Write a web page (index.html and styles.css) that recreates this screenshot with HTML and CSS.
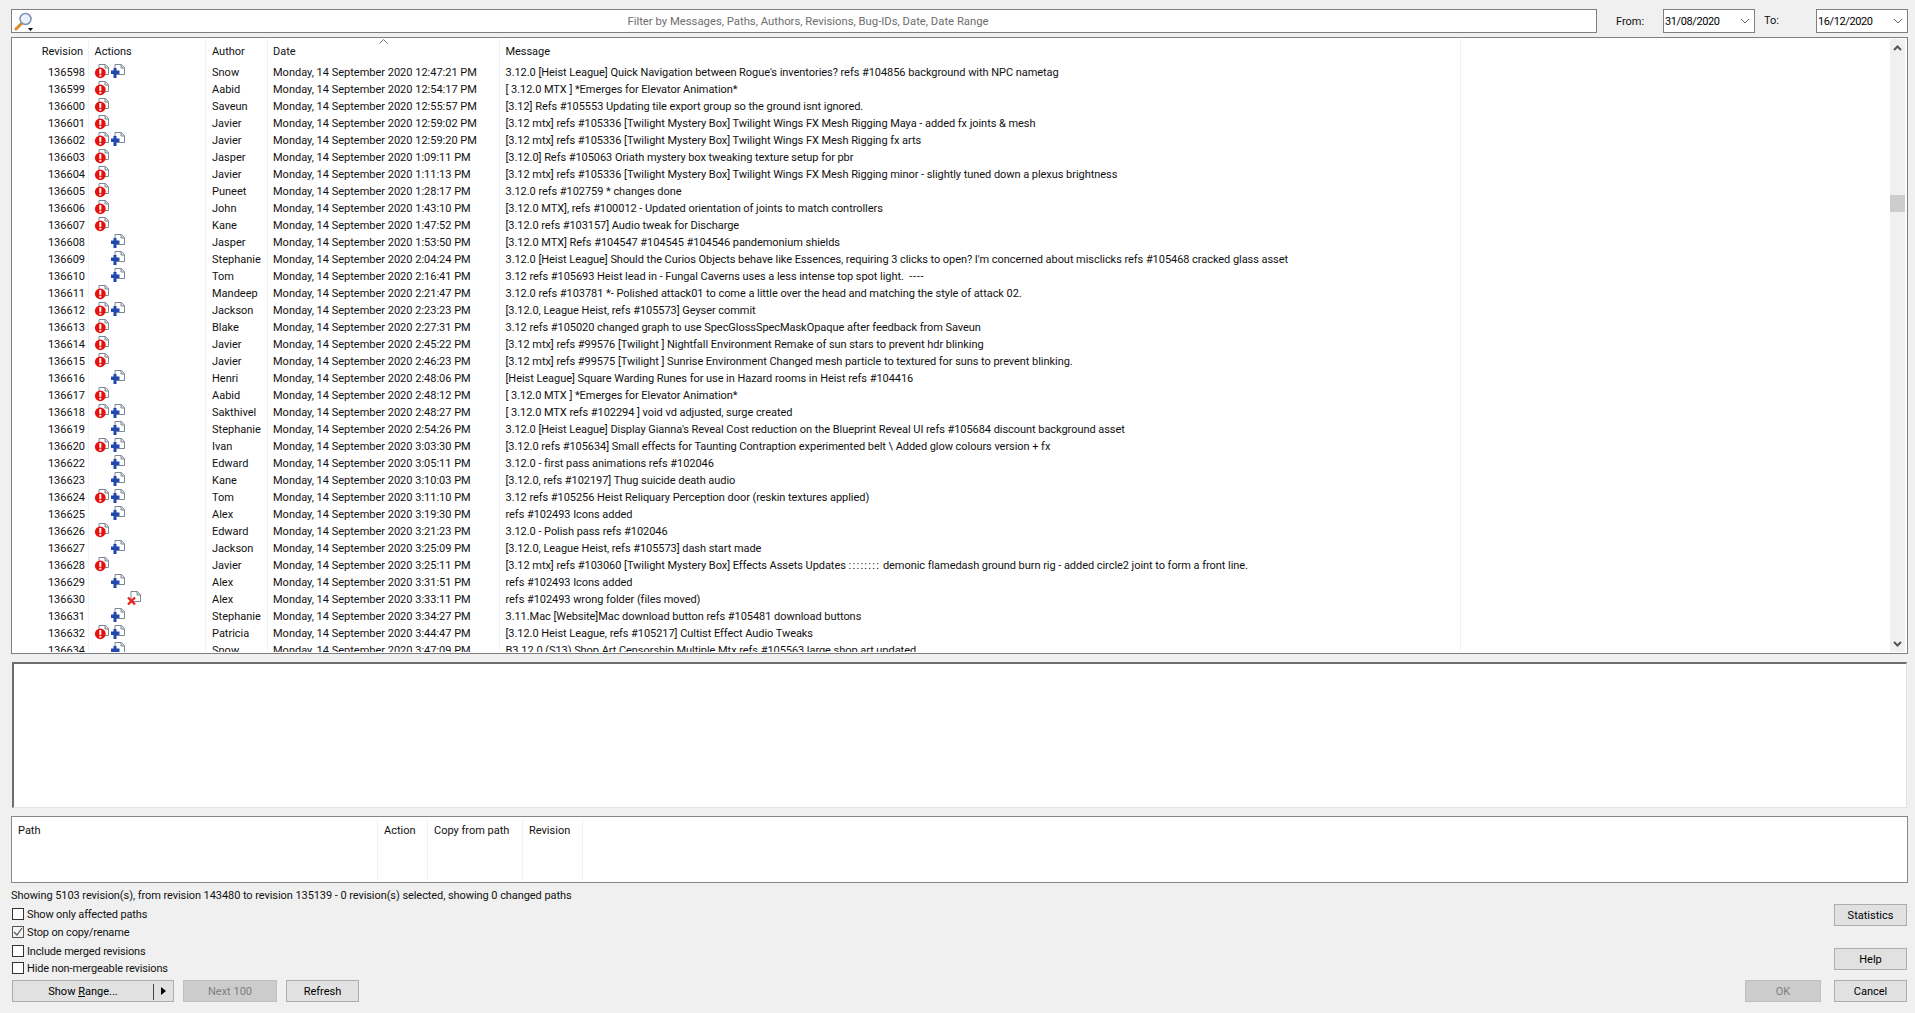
FILE: index.html
```html
<!DOCTYPE html>
<html lang="en">
<head>
<meta charset="utf-8">
<title>Log Messages</title>
<link rel="stylesheet" href="styles.css">
</head>
<body>
<svg class="defs" width="0" height="0" aria-hidden="true">
  <symbol id="page" viewBox="0 0 16 16"><path d="M5 .5H11.500L14.500 3.500V10.500H5Z" fill="#fff" stroke="#7b8794"/><path d="M11 .5V4H14.500" fill="#dfe3e8" stroke="#7b8794"/></symbol>
  <symbol id="mod" viewBox="0 0 16 16"><use href="#page"/><circle cx="6.300" cy="8.800" r="5.400" fill="#e8100c"/><rect x="5.300" y="5" width="2" height="4.800" fill="#fff"/><rect x="5.300" y="10.800" width="2" height="1.800" fill="#fff"/></symbol>
  <symbol id="add" viewBox="0 0 16 16"><use href="#page"/><path d="M3.500 4H6.500V6.500H9.500V10H6.500V14H3.500V10H1V6.500H3.500Z" fill="#2148ad"/></symbol>
  <symbol id="del" viewBox="0 0 16 16"><use href="#page"/><path d="M2 6.500L9 13.500M9 6.500L2 13.500" stroke="#e8231c" stroke-width="2.400" fill="none"/></symbol>
</svg>

<header class="topbar">
  <div class="filter">
    <svg class="magnifier" width="20" height="20" viewBox="0 0 20 20"><path d="M7 12L2 17" stroke="#d98a2b" stroke-width="3" stroke-linecap="round"/><circle cx="11.500" cy="7" r="5.500" fill="#e6f1fb" stroke="#7a93ad" stroke-width="1.500"/><path d="M8.500 6.500A3 3 0 0 1 11 4" stroke="#fff" fill="none"/><path d="M14 16H19L16.500 19Z" fill="#000"/></svg>
    <span class="filter-text">Filter by Messages, Paths, Authors, Revisions, Bug-IDs, Date, Date Range</span>
  </div>
  <span class="from-label">From:</span>
  <div class="date"><span>31/08/2020</span><svg width="10" height="6" viewBox="0 0 10 6"><path d="M1 1L5 5L9 1" fill="none" stroke="#666"/></svg></div>
  <span class="to-label">To:</span>
  <div class="date date-to"><span>16/12/2020</span><svg width="10" height="6" viewBox="0 0 10 6"><path d="M1 1L5 5L9 1" fill="none" stroke="#666"/></svg></div>
</header>

<section class="list">
  <div class="list-body">
    <div class="row head">
      <div class="c rev">Revision</div><div class="c act act-head">Actions</div><div class="c auth">Author</div><div class="c dt">Date<svg class="sort" width="9" height="5" viewBox="0 0 9 5"><path d="M.5 4.500L4.500 .5L8.500 4.500" fill="none" stroke="#777"/></svg></div><div class="c msg">Message</div><div class="c rest"></div>
    </div>
    <div class="row"><div class="c rev">136598</div><div class="c act"><svg class="ic"><use href="#mod"/></svg><svg class="ic"><use href="#add"/></svg></div><div class="c auth">Snow</div><div class="c dt">Monday, 14 September 2020 12:47:21 PM</div><div class="c msg">3.12.0 [Heist League] Quick Navigation between Rogue's inventories? refs #104856 background with NPC nametag</div><div class="c rest"></div></div>
    <div class="row"><div class="c rev">136599</div><div class="c act"><svg class="ic"><use href="#mod"/></svg></div><div class="c auth">Aabid</div><div class="c dt">Monday, 14 September 2020 12:54:17 PM</div><div class="c msg">[ 3.12.0 MTX ] *Emerges for Elevator Animation*</div><div class="c rest"></div></div>
    <div class="row"><div class="c rev">136600</div><div class="c act"><svg class="ic"><use href="#mod"/></svg></div><div class="c auth">Saveun</div><div class="c dt">Monday, 14 September 2020 12:55:57 PM</div><div class="c msg">[3.12] Refs #105553 Updating tile export group so the ground isnt ignored.</div><div class="c rest"></div></div>
    <div class="row"><div class="c rev">136601</div><div class="c act"><svg class="ic"><use href="#mod"/></svg></div><div class="c auth">Javier</div><div class="c dt">Monday, 14 September 2020 12:59:02 PM</div><div class="c msg">[3.12 mtx] refs #105336 [Twilight Mystery Box] Twilight Wings FX Mesh Rigging Maya - added fx joints &amp; mesh</div><div class="c rest"></div></div>
    <div class="row"><div class="c rev">136602</div><div class="c act"><svg class="ic"><use href="#mod"/></svg><svg class="ic"><use href="#add"/></svg></div><div class="c auth">Javier</div><div class="c dt">Monday, 14 September 2020 12:59:20 PM</div><div class="c msg">[3.12 mtx] refs #105336 [Twilight Mystery Box] Twilight Wings FX Mesh Rigging fx arts</div><div class="c rest"></div></div>
    <div class="row"><div class="c rev">136603</div><div class="c act"><svg class="ic"><use href="#mod"/></svg></div><div class="c auth">Jasper</div><div class="c dt">Monday, 14 September 2020 1:09:11 PM</div><div class="c msg">[3.12.0] Refs #105063 Oriath mystery box tweaking texture setup for pbr</div><div class="c rest"></div></div>
    <div class="row"><div class="c rev">136604</div><div class="c act"><svg class="ic"><use href="#mod"/></svg></div><div class="c auth">Javier</div><div class="c dt">Monday, 14 September 2020 1:11:13 PM</div><div class="c msg">[3.12 mtx] refs #105336 [Twilight Mystery Box] Twilight Wings FX Mesh Rigging minor - slightly tuned down a plexus brightness</div><div class="c rest"></div></div>
    <div class="row"><div class="c rev">136605</div><div class="c act"><svg class="ic"><use href="#mod"/></svg></div><div class="c auth">Puneet</div><div class="c dt">Monday, 14 September 2020 1:28:17 PM</div><div class="c msg">3.12.0 refs #102759 * changes done</div><div class="c rest"></div></div>
    <div class="row"><div class="c rev">136606</div><div class="c act"><svg class="ic"><use href="#mod"/></svg></div><div class="c auth">John</div><div class="c dt">Monday, 14 September 2020 1:43:10 PM</div><div class="c msg">[3.12.0 MTX], refs #100012 - Updated orientation of joints to match controllers</div><div class="c rest"></div></div>
    <div class="row"><div class="c rev">136607</div><div class="c act"><svg class="ic"><use href="#mod"/></svg></div><div class="c auth">Kane</div><div class="c dt">Monday, 14 September 2020 1:47:52 PM</div><div class="c msg">[3.12.0 refs #103157] Audio tweak for Discharge</div><div class="c rest"></div></div>
    <div class="row"><div class="c rev">136608</div><div class="c act"><span class="slot"></span><svg class="ic"><use href="#add"/></svg></div><div class="c auth">Jasper</div><div class="c dt">Monday, 14 September 2020 1:53:50 PM</div><div class="c msg">[3.12.0 MTX] Refs #104547 #104545 #104546 pandemonium shields</div><div class="c rest"></div></div>
    <div class="row"><div class="c rev">136609</div><div class="c act"><span class="slot"></span><svg class="ic"><use href="#add"/></svg></div><div class="c auth">Stephanie</div><div class="c dt">Monday, 14 September 2020 2:04:24 PM</div><div class="c msg">3.12.0 [Heist League] Should the Curios Objects behave like Essences, requiring 3 clicks to open? I'm concerned about misclicks refs #105468 cracked glass asset</div><div class="c rest"></div></div>
    <div class="row"><div class="c rev">136610</div><div class="c act"><span class="slot"></span><svg class="ic"><use href="#add"/></svg></div><div class="c auth">Tom</div><div class="c dt">Monday, 14 September 2020 2:16:41 PM</div><div class="c msg">3.12 refs #105693 Heist lead in - Fungal Caverns uses a less intense top spot light. &nbsp;<span class="dashes">----</span></div><div class="c rest"></div></div>
    <div class="row"><div class="c rev">136611</div><div class="c act"><svg class="ic"><use href="#mod"/></svg></div><div class="c auth">Mandeep</div><div class="c dt">Monday, 14 September 2020 2:21:47 PM</div><div class="c msg">3.12.0 refs #103781 *- Polished attack01 to come a little over the head and matching the style of attack 02.</div><div class="c rest"></div></div>
    <div class="row"><div class="c rev">136612</div><div class="c act"><svg class="ic"><use href="#mod"/></svg><svg class="ic"><use href="#add"/></svg></div><div class="c auth">Jackson</div><div class="c dt">Monday, 14 September 2020 2:23:23 PM</div><div class="c msg">[3.12.0, League Heist, refs #105573] Geyser commit</div><div class="c rest"></div></div>
    <div class="row"><div class="c rev">136613</div><div class="c act"><svg class="ic"><use href="#mod"/></svg></div><div class="c auth">Blake</div><div class="c dt">Monday, 14 September 2020 2:27:31 PM</div><div class="c msg">3.12 refs #105020 changed graph to use SpecGlossSpecMaskOpaque after feedback from Saveun</div><div class="c rest"></div></div>
    <div class="row"><div class="c rev">136614</div><div class="c act"><svg class="ic"><use href="#mod"/></svg></div><div class="c auth">Javier</div><div class="c dt">Monday, 14 September 2020 2:45:22 PM</div><div class="c msg">[3.12 mtx] refs #99576 [Twilight ] Nightfall Environment Remake of sun stars to prevent hdr blinking</div><div class="c rest"></div></div>
    <div class="row"><div class="c rev">136615</div><div class="c act"><svg class="ic"><use href="#mod"/></svg></div><div class="c auth">Javier</div><div class="c dt">Monday, 14 September 2020 2:46:23 PM</div><div class="c msg">[3.12 mtx] refs #99575 [Twilight ] Sunrise Environment Changed mesh particle to textured for suns to prevent blinking.</div><div class="c rest"></div></div>
    <div class="row"><div class="c rev">136616</div><div class="c act"><span class="slot"></span><svg class="ic"><use href="#add"/></svg></div><div class="c auth">Henri</div><div class="c dt">Monday, 14 September 2020 2:48:06 PM</div><div class="c msg">[Heist League] Square Warding Runes for use in Hazard rooms in Heist refs #104416</div><div class="c rest"></div></div>
    <div class="row"><div class="c rev">136617</div><div class="c act"><svg class="ic"><use href="#mod"/></svg></div><div class="c auth">Aabid</div><div class="c dt">Monday, 14 September 2020 2:48:12 PM</div><div class="c msg">[ 3.12.0 MTX ] *Emerges for Elevator Animation*</div><div class="c rest"></div></div>
    <div class="row"><div class="c rev">136618</div><div class="c act"><svg class="ic"><use href="#mod"/></svg><svg class="ic"><use href="#add"/></svg></div><div class="c auth">Sakthivel</div><div class="c dt">Monday, 14 September 2020 2:48:27 PM</div><div class="c msg">[ 3.12.0 MTX refs #102294 ] void vd adjusted, surge created</div><div class="c rest"></div></div>
    <div class="row"><div class="c rev">136619</div><div class="c act"><span class="slot"></span><svg class="ic"><use href="#add"/></svg></div><div class="c auth">Stephanie</div><div class="c dt">Monday, 14 September 2020 2:54:26 PM</div><div class="c msg">3.12.0 [Heist League] Display Gianna's Reveal Cost reduction on the Blueprint Reveal UI refs #105684 discount background asset</div><div class="c rest"></div></div>
    <div class="row"><div class="c rev">136620</div><div class="c act"><svg class="ic"><use href="#mod"/></svg><svg class="ic"><use href="#add"/></svg></div><div class="c auth">Ivan</div><div class="c dt">Monday, 14 September 2020 3:03:30 PM</div><div class="c msg">[3.12.0 refs #105634] Small effects for Taunting Contraption experimented belt \ Added glow colours version + fx</div><div class="c rest"></div></div>
    <div class="row"><div class="c rev">136622</div><div class="c act"><span class="slot"></span><svg class="ic"><use href="#add"/></svg></div><div class="c auth">Edward</div><div class="c dt">Monday, 14 September 2020 3:05:11 PM</div><div class="c msg">3.12.0 - first pass animations refs #102046</div><div class="c rest"></div></div>
    <div class="row"><div class="c rev">136623</div><div class="c act"><span class="slot"></span><svg class="ic"><use href="#add"/></svg></div><div class="c auth">Kane</div><div class="c dt">Monday, 14 September 2020 3:10:03 PM</div><div class="c msg">[3.12.0, refs #102197] Thug suicide death audio</div><div class="c rest"></div></div>
    <div class="row"><div class="c rev">136624</div><div class="c act"><svg class="ic"><use href="#mod"/></svg><svg class="ic"><use href="#add"/></svg></div><div class="c auth">Tom</div><div class="c dt">Monday, 14 September 2020 3:11:10 PM</div><div class="c msg">3.12 refs #105256 Heist Reliquary Perception door (reskin textures applied)</div><div class="c rest"></div></div>
    <div class="row"><div class="c rev">136625</div><div class="c act"><span class="slot"></span><svg class="ic"><use href="#add"/></svg></div><div class="c auth">Alex</div><div class="c dt">Monday, 14 September 2020 3:19:30 PM</div><div class="c msg">refs #102493 Icons added</div><div class="c rest"></div></div>
    <div class="row"><div class="c rev">136626</div><div class="c act"><svg class="ic"><use href="#mod"/></svg></div><div class="c auth">Edward</div><div class="c dt">Monday, 14 September 2020 3:21:23 PM</div><div class="c msg">3.12.0 - Polish pass refs #102046</div><div class="c rest"></div></div>
    <div class="row"><div class="c rev">136627</div><div class="c act"><span class="slot"></span><svg class="ic"><use href="#add"/></svg></div><div class="c auth">Jackson</div><div class="c dt">Monday, 14 September 2020 3:25:09 PM</div><div class="c msg">[3.12.0, League Heist, refs #105573] dash start made</div><div class="c rest"></div></div>
    <div class="row"><div class="c rev">136628</div><div class="c act"><svg class="ic"><use href="#mod"/></svg></div><div class="c auth">Javier</div><div class="c dt">Monday, 14 September 2020 3:25:11 PM</div><div class="c msg">[3.12 mtx] refs #103060 [Twilight Mystery Box] Effects Assets Updates <span class="colons">::::::::</span> demonic flamedash ground burn rig - added circle2 joint to form a front line.</div><div class="c rest"></div></div>
    <div class="row"><div class="c rev">136629</div><div class="c act"><span class="slot"></span><svg class="ic"><use href="#add"/></svg></div><div class="c auth">Alex</div><div class="c dt">Monday, 14 September 2020 3:31:51 PM</div><div class="c msg">refs #102493 Icons added</div><div class="c rest"></div></div>
    <div class="row"><div class="c rev">136630</div><div class="c act"><span class="slot"></span><span class="slot"></span><svg class="ic"><use href="#del"/></svg></div><div class="c auth">Alex</div><div class="c dt">Monday, 14 September 2020 3:33:11 PM</div><div class="c msg">refs #102493 wrong folder (files moved)</div><div class="c rest"></div></div>
    <div class="row"><div class="c rev">136631</div><div class="c act"><span class="slot"></span><svg class="ic"><use href="#add"/></svg></div><div class="c auth">Stephanie</div><div class="c dt">Monday, 14 September 2020 3:34:27 PM</div><div class="c msg">3.11.Mac [Website]Mac download button refs #105481 download buttons</div><div class="c rest"></div></div>
    <div class="row"><div class="c rev">136632</div><div class="c act"><svg class="ic"><use href="#mod"/></svg><svg class="ic"><use href="#add"/></svg></div><div class="c auth">Patricia</div><div class="c dt">Monday, 14 September 2020 3:44:47 PM</div><div class="c msg">[3.12.0 Heist League, refs #105217] Cultist Effect Audio Tweaks</div><div class="c rest"></div></div>
    <div class="row"><div class="c rev">136634</div><div class="c act"><span class="slot"></span><svg class="ic"><use href="#add"/></svg></div><div class="c auth">Snow</div><div class="c dt">Monday, 14 September 2020 3:47:09 PM</div><div class="c msg">B3.12.0 (S13) Shop Art Censorship Multiple Mtx refs #105563 large shop art updated</div><div class="c rest"></div></div>
  </div>
  <div class="scrollbar">
    <div class="sb-arrow"><svg width="9" height="6" viewBox="0 0 9 6"><path d="M1 5L4.500 1.500L8 5" fill="none" stroke="#555" stroke-width="2"/></svg></div>
    <div class="sb-track"><div class="sb-thumb"></div></div>
    <div class="sb-arrow"><svg width="9" height="6" viewBox="0 0 9 6"><path d="M1 1L4.500 4.500L8 1" fill="none" stroke="#555" stroke-width="2"/></svg></div>
  </div>
</section>

<div class="message-box"></div>

<section class="paths">
  <div class="p p-path">Path</div><div class="p p-action">Action</div><div class="p p-copy">Copy from path</div><div class="p p-rev">Revision</div>
</section>

<div class="status">Showing 5103 revision(s), from revision 143480 to revision 135139 - 0 revision(s) selected, showing 0 changed paths</div>

<footer class="bottom">
  <div class="left">
    <div class="check h18"><span class="box"></span>Show only affected paths</div>
    <div class="check h18"><span class="box"><svg width="10" height="10" viewBox="0 0 10 10"><path d="M1 5L4 8L9 1" fill="none" stroke="#555" stroke-width="1.200"/></svg></span>Stop on copy/rename</div>
    <div class="check h19"><span class="box"></span>Include merged revisions</div>
    <div class="check h16"><span class="box"></span>Hide non-mergeable revisions</div>
    <div class="btn-row">
      <div class="btn btn-range"><span class="range-label">Show <u>R</u>ange...</span><span class="range-split"><svg width="5" height="8" viewBox="0 0 5 8"><path d="M0 0L5 4L0 8Z" fill="#000"/></svg></span></div>
      <div class="btn btn-next disabled">Next 100</div>
      <div class="btn btn-refresh">Refresh</div>
    </div>
  </div>
  <div class="right">
    <div class="btn btn-side btn-stats">Statistics</div>
    <div class="btn btn-side btn-help">Help</div>
    <div class="ok-row">
      <div class="btn btn-ok disabled">OK</div>
      <div class="btn btn-side">Cancel</div>
    </div>
  </div>
</footer>
</body>
</html>
```
FILE: styles.css
```css
* { box-sizing: border-box; }
html, body { margin: 0; padding: 0; }
body {
  width: 1915px;
  height: 1013px;
  overflow: hidden;
  background: #f0f0f0;
  color: #111;
  font: 11px/16px Roboto, "Liberation Sans", Arial, sans-serif;
}
.defs { display: block; height: 0; }

/* top bar */
.topbar { display: flex; align-items: flex-start; height: 33px; padding: 9px 0 0 11px; }
.filter {
  position: relative;
  display: flex; align-items: center; justify-content: center;
  width: 1586px; height: 24px;
  padding: 1px 0 0 8px;
  background: #fff; border: 1px solid #7f7f7f;
  color: #6d6d6d;
  font-size: 11.300px;
}
.magnifier { position: absolute; left: 2px; top: 2px; }
.from-label { width: 47px; margin-left: 19px; line-height: 26px; }
.to-label { width: 52px; margin-left: 9px; line-height: 24px; }
.date {
  display: flex; align-items: center; justify-content: space-between;
  width: 92px; height: 24px; padding: 0 4px 0 1px;
  background: #fff; border: 1px solid #7f7f7f; color: #000;
  letter-spacing: -.4px;
}
.date span { padding-top: 2px; }

/* revision list */
.list {
  display: flex;
  width: 1897px; height: 617px;
  margin: 4px 0 0 11px;
  padding: 1px 2px 1px 0;
  background: #fff; border: 1px solid #7f7f7f;
  overflow: hidden;
}
.list-body { flex: 1; min-width: 0; overflow: hidden; }
.row {
  display: grid;
  grid-template-columns: 77px 117px 62px 232px 961px 1fr;
  height: 17px;
}
.row.head { height: 25px; position: relative; }
.head .c { padding-top: 4px; }
.c {
  height: 100%;
  white-space: nowrap; overflow: hidden;
  border-right: 1px solid #edf2f9;
  line-height: 18px;
}
.rev { text-align: right; padding-right: 3px; }
.head .rev { padding-right: 5px; }
.act { display: flex; padding-left: 5px; }
.act-head { padding-left: 5.500px; }
.auth { padding-left: 6px; }
.dt { padding-left: 5px; }
.msg { padding-left: 5.500px; letter-spacing: -.05px; }
.dashes { letter-spacing: .7px; }
.colons { letter-spacing: 1.300px; }
.rest { border-right: 0; }
.ic { display: block; width: 16px; height: 16px; flex: none; }
.slot { display: block; width: 16px; flex: none; }
.sort { position: absolute; left: 367px; top: 0; }

.scrollbar { display: flex; flex-direction: column; width: 15px; flex: none; background: #f0f0f0; }
.sb-arrow { display: flex; align-items: center; justify-content: center; height: 17px; flex: none; }
.sb-track { flex: 1; padding-top: 139px; }
.sb-thumb { height: 17px; background: #cdcdcd; }

/* message box */
.message-box {
  width: 1895px; height: 146px;
  margin: 8px 0 0 12px;
  background: #fff;
  border-style: solid; border-color: #6e6e6e #e3e3e3 #e3e3e3 #6e6e6e;
  border-width: 2px 1px 1px 2px;
}

/* changed paths */
.paths {
  display: flex;
  width: 1897px; height: 67px;
  margin: 8px 0 0 11px;
  padding: 2px 0;
  background: #fff; border: 1px solid #828790;
}
.p { padding: 4px 0 0 6px; border-right: 1px solid #edf2f9; height: 100%; }
.p-path { width: 366px; padding-left: 6px; }
.p-action { width: 50px; }
.p-copy { width: 95px; }
.p-rev { width: 60px; }

.status { margin: 4px 0 0 11px; height: 18px; line-height: 18px; letter-spacing: -.07px; }

/* bottom */
.bottom { display: flex; justify-content: space-between; padding: 0 8px 0 12px; }
.check { display: flex; align-items: center; padding-top: 2px; letter-spacing: -.15px; }
.h18 { height: 18px; }
.h19 { height: 19px; }
.h16 { height: 16px; }
.box {
  display: flex; align-items: center; justify-content: center;
  width: 12px; height: 12px; margin: -2px 3px 0 0;
  background: #fff; border: 1px solid #333;
}
.check:nth-child(2) .box { background: #f4f4f4; border-color: #555; }
.btn-row { display: flex; margin-top: 4px; }
.btn {
  display: flex; align-items: center; justify-content: center;
  height: 22px;
  padding-top: 2px;
  background: #e1e1e1; border: 1px solid #adadad;
  color: #000;
}
.btn.disabled { background: #cccccc; border-color: #bfbfbf; color: #7f7f7f; }
.btn-range { width: 162px; justify-content: flex-start; }
.range-label { width: 141px; text-align: center; border-right: 1px solid #444; line-height: 16px; }
.range-split { display: flex; flex: 1; justify-content: center; margin-top: -2px; }
.btn-next { width: 94px; margin-left: 9px; }
.btn-refresh { width: 73px; margin-left: 9px; }
.right { display: flex; flex-direction: column; align-items: flex-end; }
.btn-side { width: 73px; }
.btn-stats { margin-top: -1px; }
.btn-help { margin-top: 22px; }
.ok-row { display: flex; margin-top: 10px; }
.btn-ok { width: 76px; margin-right: 13px; }
```
